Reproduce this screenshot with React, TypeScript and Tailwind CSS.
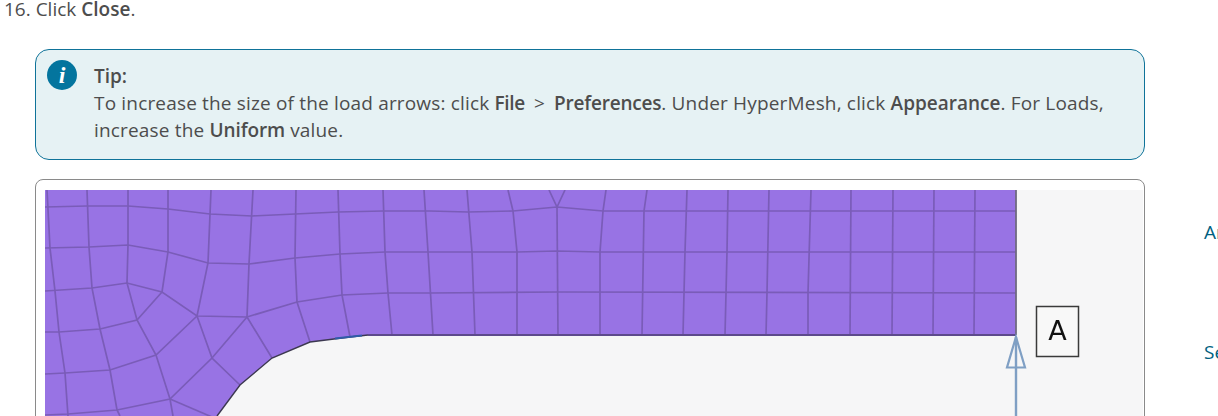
const FONT = "font-['Open_Sans',sans-serif]";

// mesh lines, in page coordinates (the svg viewBox starts at the image's corner)
const MESH: string[] = [
  // rows
  "45,207 87,206 128,206 168,209 210,214 252,216 295,214 338,212 383,211 430,211 468,212 513,211 557,207 603,211 800,211 1016,211",
  "45,248 89,247 128,245 168,252 208,263 249,264 295,258 340,254 385,252 430,252 517,252 557,251 600,252 1016,252",
  "45,291 92,288 127,283 162,292 197,316 247,317 297,302 342,295 388,293 430,293 557,292 1016,293",
  "45,332 59,332 100,329 137,320 162,292",
  "45,374 65,373 110,370 156,355 197,316",
  "45,415 68,414 117,410 170,399 212,358 247,317",
  "170,399 212,417",
  // columns
  "47,190 50,248 55,291 59,332 65,373 68,416",
  "87,190 89,247 92,288 100,329 110,370 117,410 120,416",
  "128,190 128,245 127,283 137,320 156,355 170,399 173,416",
  "168,190 168,252 162,292",
  "211,190 208,263 197,316 212,358 240,385",
  "253,190 249,264 247,317 272,358",
  "296,190 295,258 297,302 310,342",
  "338,190 340,254 342,295 350,337",
  "383,190 385,252 388,293 392,335",
  "424,190 428,252 433,335",
  "467,190 472,252 475,335",
  "508,190 513,211 517,252 517,335",
  "549,190 557,207 565,190",
  "557,207 558,335",
  "606,190 603,211 600,252 600,335",
  "647,190 644,211 642,335",
  "687,190 685,252 683,335",
  "728,190 727,252 725,335",
  "769,190 767,293 766,335",
  "811,190 808,293 808,335",
  "851,190 850,335",
  "893,190 892,335",
  "934,190 933,335",
  "975,190 974,335",
];

const MeshPicture = () => (
  <svg width="1098" height="240" viewBox="45 190 1098 240" className="block blur-[0.5px]">
    <rect x="45" y="190" width="1098" height="240" fill="#f6f6f7" />
    <polygon
      points="45,190 1016,190 1016,335 368,335 350,337 310,342 272,358 240,385 217,416 205,430 45,430"
      fill="#9873e4"
    />
    {MESH.map((line) => (
      <polyline key={line} points={line} fill="none" stroke="#7a5cb8" strokeWidth="1.7" />
    ))}
    <polyline points="1016,190 1016,335" fill="none" stroke="#6f6a80" strokeWidth="1.8" />
    <polyline points="1016,335 368,335" fill="none" stroke="#5d4a8c" strokeWidth="1.8" />
    <polyline points="368,335 350,337 310,342 272,358 240,385 217,416" fill="none" stroke="#3c3850" strokeWidth="1.4" />
    <polyline points="335,338.5 362,335.5" fill="none" stroke="#2f5ca8" strokeWidth="2.2" />
    {/* load arrow */}
    <polygon points="1016,337 1025,367.5 1007,367.5" fill="none" stroke="#7f9fc4" strokeWidth="2.2" />
    <line x1="1016" y1="337" x2="1016" y2="430" stroke="#7f9fc4" strokeWidth="2.4" />
    {/* label */}
    <rect x="1036.5" y="306.5" width="42" height="50" fill="#f8f8f8" stroke="#3a3a3a" strokeWidth="1.5" />
    <text x="1057.5" y="340" textAnchor="middle" fontSize="27" fontFamily="DejaVu Sans, sans-serif" fill="#111">
      A
    </text>
  </svg>
);

export default function App() {
  return (
    <div className={`${FONT} flex h-[416px] w-[1218px] overflow-hidden bg-white text-[19px] leading-[27px] text-[#4d4d4d]`}>
      <div className="w-[1145px] shrink-0">
        <p className="pl-1 leading-[18px]">
          16. Click <b className="font-semibold">Close</b>.
        </p>

        <div className="ml-[35px] mt-[31px] flex h-[111px] gap-[17px] rounded-[14px] border border-[#0f7399] bg-[#e6f2f4] pl-[11px] pt-[10px]">
          <div className="flex h-[30px] w-[30px] shrink-0 items-center justify-center rounded-full bg-[#04759e] font-['Liberation_Serif',serif] text-[24px] font-bold italic text-white">
            i
          </div>
          <div className="pt-[3px] tracking-[0.17px]">
            <p className="font-semibold tracking-normal">Tip:</p>
            <p>
              To increase the size of the load arrows: click{" "}
              <b className="font-semibold tracking-[-0.3px]">File</b>
              <span className="mx-[9px]">&gt;</span>
              <b className="font-semibold tracking-[-0.2px]">Preferences</b>. Under HyperMesh, click{" "}
              <b className="font-semibold tracking-normal">Appearance</b>. For Loads,
              <br />
              increase the <b className="font-semibold tracking-[-0.1px]">Uniform</b> value.
            </p>
          </div>
        </div>

        <div className="ml-[35px] mt-[19px] h-[260px] overflow-hidden rounded-lg border border-[#8a8a8a] pl-[9px] pt-[10px]">
          <MeshPicture />
        </div>
      </div>

      <div className="ml-[59px] flex shrink-0 flex-col gap-[93px] whitespace-nowrap pt-[219px] text-[#00607f]">
        <span>Analysis</span>
        <span>See also</span>
      </div>
    </div>
  );
}
